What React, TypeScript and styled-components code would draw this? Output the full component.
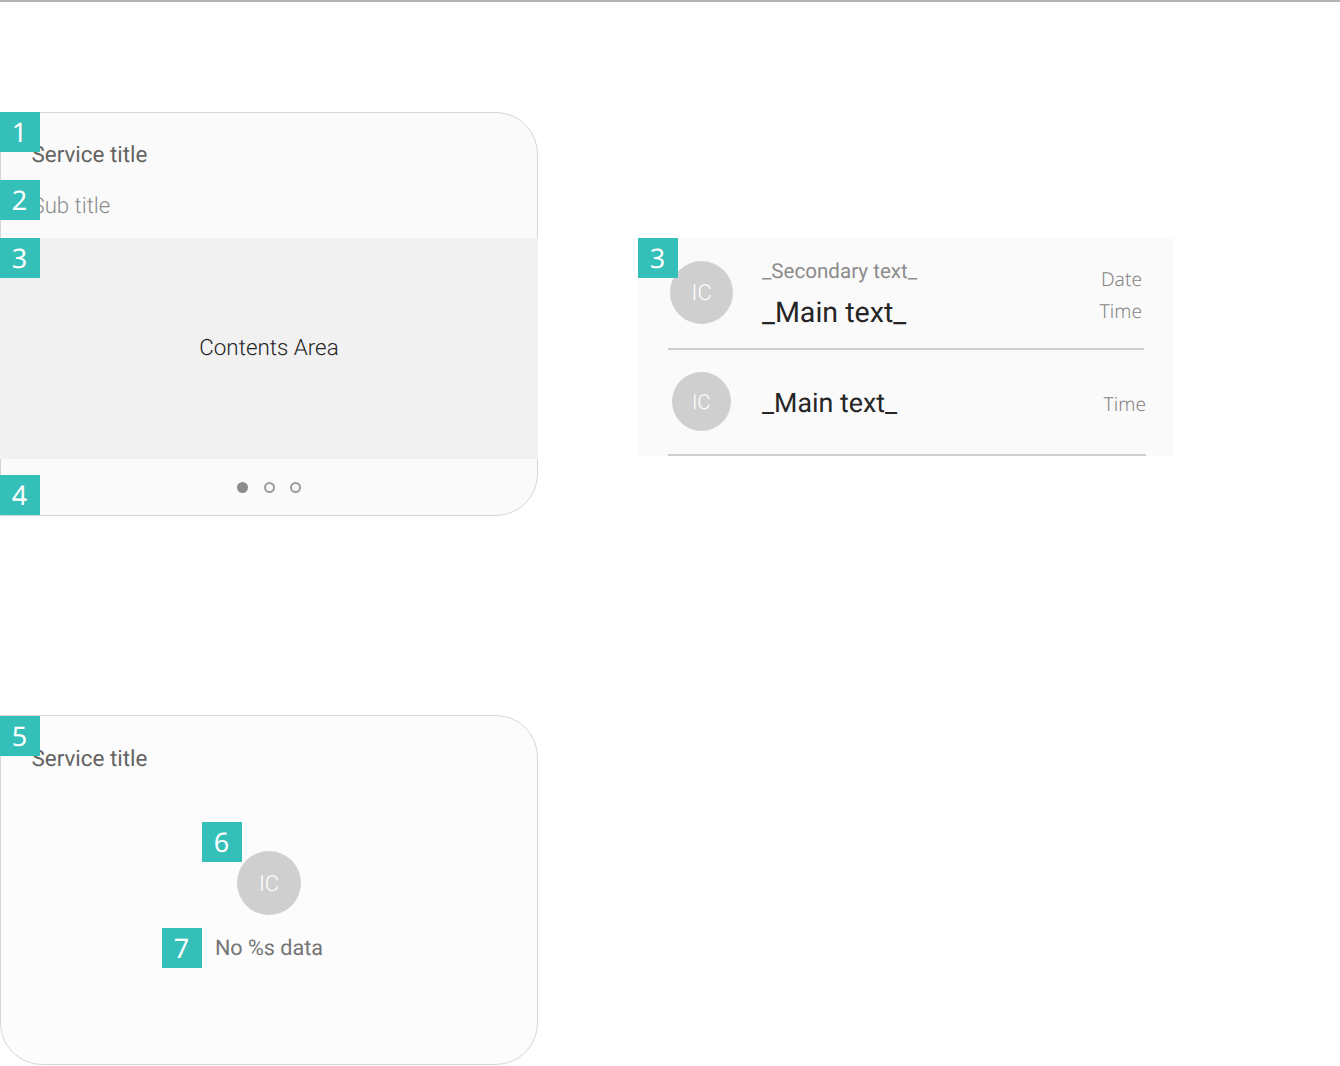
import React from "react";
import styled, { createGlobalStyle } from "styled-components";

const GlobalStyle = createGlobalStyle`
  *, *::before, *::after { box-sizing: border-box; }
  body {
    margin: 0;
    background: #fff;
    font-family: Roboto, "Liberation Sans", sans-serif;
    text-rendering: geometricPrecision;
  }
`;

const Page = styled.main`
  width: 1340px;
  height: 1066px;
  overflow: hidden;
  border-top: 2px solid #b2b2b2;
  padding-top: 110px;
  display: flex;
  flex-direction: column;
  gap: 199px;
`;

const Row = styled.section`
  display: flex;
  align-items: flex-start;
  gap: 100px;
`;

const Card = styled.article<{ $height: number; $bg: string; $corners: string }>`
  position: relative;
  width: 538px;
  height: ${(p) => p.$height}px;
  background: ${(p) => p.$bg};
  border: 1px solid #d6d6d6;
  border-radius: ${(p) => p.$corners};
  display: flex;
  flex-direction: column;
`;

const Badge = styled.span<{ $x?: number; $y?: number }>`
  position: absolute;
  left: ${(p) => p.$x ?? 0}px;
  top: ${(p) => p.$y ?? 0}px;
  width: 40px;
  height: 40px;
  background: #34c0b8;
  color: #fff;
  font: 400 27px/40px "Noto Sans", sans-serif;
  text-align: center;
  padding-right: 1px;
`;

const Label = styled.span<{
  $size: number;
  $line: number;
  $color: string;
  $weight?: number;
}>`
  display: block;
  white-space: nowrap;
  font-size: ${(p) => p.$size}px;
  line-height: ${(p) => p.$line}px;
  color: ${(p) => p.$color};
  font-weight: ${(p) => p.$weight ?? 400};
`;

const Heading = styled.header<{ $height: number; $top: number }>`
  height: ${(p) => p.$height}px;
  padding: ${(p) => p.$top}px 0 0 30.5px;
  display: flex;
  flex-direction: column;
  gap: 19px;
`;

const Contents = styled.div`
  height: 221px;
  margin: 0 -1px;
  background: #f1f1f1;
  display: flex;
  align-items: center;
  justify-content: center;
  padding-bottom: 2px;
`;

const Pager = styled.div`
  display: flex;
  justify-content: center;
  gap: 15.5px;
  padding-top: 22.5px;
`;

const Dot = styled.i<{ $active?: boolean }>`
  width: 11px;
  height: 11px;
  border-radius: 50%;
  border: 2px solid ${(p) => (p.$active ? "#8c8c8c" : "#9c9c9c")};
  background: ${(p) => (p.$active ? "#8c8c8c" : "transparent")};
`;

const Panel = styled.div`
  position: relative;
  width: 535px;
  height: 218px;
  margin-top: 126px;
  padding-left: 30px;
  background: #fafafa;
`;

const Item = styled.div<{ $width: number; $height: number; $inset: number }>`
  width: ${(p) => p.$width}px;
  height: ${(p) => p.$height}px;
  padding-left: ${(p) => p.$inset}px;
  border-bottom: 2px solid #cecece;
  display: flex;
  align-items: flex-start;
`;

const Avatar = styled.div<{ $size: number; $top?: number; $font: number }>`
  flex: none;
  width: ${(p) => p.$size}px;
  height: ${(p) => p.$size}px;
  margin-top: ${(p) => p.$top ?? 0}px;
  border-radius: 50%;
  background: #cfcfcf;
  color: #fff;
  font-size: ${(p) => p.$font}px;
  font-weight: 300;
  display: flex;
  align-items: center;
  justify-content: center;
  padding-top: 3px;
`;

const Stack = styled.div<{ $top: number; $left: number }>`
  flex: 1;
  padding-top: ${(p) => p.$top}px;
  padding-left: ${(p) => p.$left}px;
`;

const Meta = styled.div<{ $top: number; $right: number }>`
  padding-top: ${(p) => p.$top}px;
  padding-right: ${(p) => p.$right}px;
  font: 300 19.2px/32px "Noto Sans", sans-serif;
  color: #858585;
  text-align: right;
`;

const Empty = styled.div`
  display: flex;
  flex-direction: column;
  align-items: center;
  gap: 19px;
  padding-top: 75px;
`;

export default function App() {
  return (
    <>
      <GlobalStyle />
      <Page>
        <Row>
          <Card $height={404} $bg="#fafafa" $corners="0 42px 42px 0">
            <Heading $height={125} $top={26}>
              <Label $size={22.4} $line={32} $color="#636363">Service title</Label>
              <Label $size={22.2} $line={32} $color="#8c8c8c" $weight={300}>Sub title</Label>
            </Heading>
            <Contents>
              <Label $size={22.4} $line={32} $color="#252525" $weight={300}>Contents Area</Label>
            </Contents>
            <Pager>
              <Dot $active />
              <Dot />
              <Dot />
            </Pager>
            <Badge $x={-1} $y={-1}>1</Badge>
            <Badge $x={-1} $y={67}>2</Badge>
            <Badge $x={-1} $y={125}>3</Badge>
            <Badge $x={-1} $y={362}>4</Badge>
          </Card>
          <Panel>
            <Item $width={476} $height={112} $inset={1.8}>
              <Avatar $size={63.6} $top={22.6} $font={22}>IC</Avatar>
              <Stack $top={18} $left={28.6}>
                <Label $size={20.6} $line={32} $color="#8c8c8c">_Secondary text_</Label>
                <Label $size={28.6} $line={48} $color="#252525">_Main text_</Label>
              </Stack>
              <Meta $top={25} $right={2}>
                <div>Date</div>
                <div>Time</div>
              </Meta>
            </Item>
            <Item $width={478} $height={106} $inset={3.5}>
              <Avatar $size={59.6} $top={21.7} $font={20.5}>IC</Avatar>
              <Stack $top={29} $left={30.9}>
                <Label $size={26.8} $line={48} $color="#252525">_Main text_</Label>
              </Stack>
              <Meta $top={38} $right={0}>Time</Meta>
            </Item>
            <Badge>3</Badge>
          </Panel>
        </Row>
        <Row>
          <Card $height={350} $bg="#fcfcfc" $corners="0 42px 42px 42px">
            <Heading $height={60} $top={27}>
              <Label $size={22.4} $line={32} $color="#636363">Service title</Label>
            </Heading>
            <Empty>
              <Avatar $size={64} $font={22}>IC</Avatar>
              <Label $size={21.6} $line={30} $color="#757575">No %s data</Label>
            </Empty>
            <Badge $x={-1} $y={0}>5</Badge>
            <Badge $x={201} $y={106}>6</Badge>
            <Badge $x={161} $y={212}>7</Badge>
          </Card>
        </Row>
      </Page>
    </>
  );
}
